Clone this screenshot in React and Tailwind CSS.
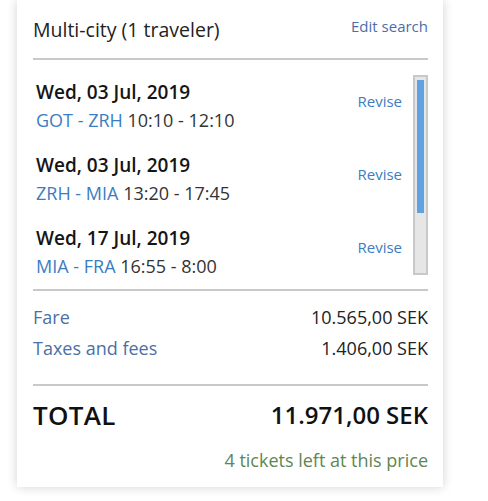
export default function App() {
  const items = [
    { date: "Wed, 03 Jul, 2019", route: "GOT - ZRH", time: "10:10 - 12:10" },
    { date: "Wed, 03 Jul, 2019", route: "ZRH - MIA", time: "13:20 - 17:45" },
    { date: "Wed, 17 Jul, 2019", route: "MIA - FRA", time: "16:55 - 8:00" },
  ];
  return (
    <div className="w-[488px] h-[501px] bg-white overflow-hidden" style={{ fontFamily: '"Open Sans", "Noto Sans", sans-serif' }}>
      <div className="ml-[17px] w-[426px] h-[487px] bg-white shadow-[0_0_10px_rgba(0,0,0,0.18)] px-[16px] pr-[15px] flex flex-col">
        <div className="flex justify-between h-[58px]">
          <div className="text-[19.5px] leading-[24px] text-[#222] mt-[18px]">Multi-city (1 traveler)</div>
          <div className="text-[15px] leading-[20px] text-[#4a6fa6] mt-[16px]">Edit search</div>
        </div>
        <div className="h-[2px] bg-[#c9c9c9]" />
        <div className="flex mt-[15px] h-[200px]">
          <div className="flex-1 pl-[3px] pr-[11px] pt-[5px]">
            {items.map((it, i) => (
              <div key={i} className={`flex justify-between ${i < 2 ? "h-[73px]" : ""}`}>
                <div>
                  <div className="text-[19px] leading-[24px] font-semibold text-[#151515]">{it.date}</div>
                  <div className="text-[18px] leading-[24px] mt-[4px] text-[#333]">
                    <span className="text-[#3b7dc2]">{it.route}</span> {it.time}
                  </div>
                </div>
                <div className="text-[15px] leading-[20px] text-[#3b7dc2] mt-[11px]">Revise</div>
              </div>
            ))}
          </div>
          <div className="w-[15px] h-[200px] border-2 border-[#c8c8c8] bg-[#e6e6e6] pt-[3px] px-[2px]">
            <div className="w-[7px] h-[133px] bg-[#5ea2e2]" />
          </div>
        </div>
        <div className="h-[2px] bg-[#c9c9c9] mt-[14px]" />
        <div className="flex justify-between text-[18px] leading-[30px] mt-[11px]">
          <span className="text-[#4a70a6]">Fare</span>
          <span className="text-[#222]">10.565,00 SEK</span>
        </div>
        <div className="flex justify-between text-[18px] leading-[30px] mt-[1px]">
          <span className="text-[#4a70a6]">Taxes and fees</span>
          <span className="text-[#222]">1.406,00 SEK</span>
        </div>
        <div className="h-[2px] bg-[#c9c9c9] mt-[21px]" />
        <div className="flex justify-between items-center mt-[14px] h-[30px]">
          <span className="text-[26px] font-semibold text-[#111] tracking-[0.3px]">TOTAL</span>
          <span className="text-[24px] font-semibold text-[#111]">11.971,00 SEK</span>
        </div>
        <div className="text-right text-[18px] leading-[26px] text-[#5d8753] mt-[17px]">4 tickets left at this price</div>
      </div>
    </div>
  );
}
